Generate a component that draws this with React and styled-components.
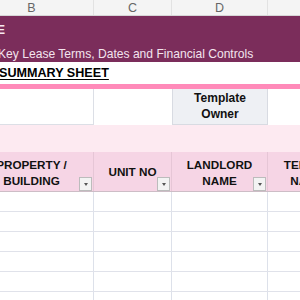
import React from "react";
import styled, { createGlobalStyle } from "styled-components";

const GlobalStyle = createGlobalStyle`
  html, body {
    margin: 0;
    padding: 0;
    background: #ffffff;
    overflow: hidden;
  }
  body {
    font-family: "Liberation Sans", Arial, sans-serif;
  }
`;

const COLS = "124px 78px 96px 80px";

const Viewport = styled.div`
  width: 300px;
  height: 300px;
  overflow: hidden;
`;

const Sheet = styled.div`
  margin-left: -30px;
  width: 378px;
  display: flex;
  flex-direction: column;
`;

const Row = styled.div`
  display: grid;
  grid-template-columns: ${COLS};
  height: ${(p) => p.$h}px;
  background: ${(p) => p.$bg || "#ffffff"};
  box-sizing: border-box;
  border-bottom: ${(p) => (p.$line ? `1px solid ${p.$line}` : "none")};
`;

const ColLetter = styled.div`
  display: flex;
  align-items: center;
  justify-content: center;
  font-size: 12.5px;
  color: #666666;
  background: #f4f4f4;
  border-right: 1px solid #e2e2e2;
`;

const Banner = styled.div`
  height: 46px;
  background: #7b2d5b;
  display: flex;
  flex-direction: column;
  padding-left: 28px;
  box-sizing: border-box;
`;

/* only the tail of the title spills into view from column A */
const TitleSlot = styled.div`
  width: 5px;
  margin-left: 2px;
  margin-top: 7px;
  display: flex;
  justify-content: flex-end;
  white-space: nowrap;
  font-size: 12px;
  font-weight: bold;
  color: #f6e9f1;
  height: 14px;
  line-height: 14px;
`;

const Subtitle = styled.div`
  margin-top: 10px;
  font-size: 12.1px;
  color: #f3e4ee;
  white-space: nowrap;
  line-height: 14px;
`;

const SummaryRow = styled.div`
  height: 22px;
  padding-left: 29px;
  display: flex;
  align-items: flex-start;
`;

const SummaryTitle = styled.span`
  margin-top: 4px;
  font-size: 12.6px;
  font-weight: bold;
  color: #000000;
  text-decoration: underline;
  text-underline-offset: 2px;
  white-space: nowrap;
`;

const PinkRule = styled.div`
  height: 5px;
  background: #ff8ab9;
`;

const Cell = styled.div`
  box-sizing: border-box;
  position: relative;
  display: flex;
  align-items: center;
  justify-content: center;
  text-align: center;
  background: ${(p) => p.$bg || "transparent"};
  border-right: ${(p) => (p.$right ? `1px solid ${p.$right}` : "none")};
  border-bottom: ${(p) => (p.$bottom ? `1px solid ${p.$bottom}` : "none")};
  border-left: ${(p) => (p.$left ? `1px solid ${p.$left}` : "none")};
`;

const Label = styled.div`
  font-size: ${(p) => p.$size || 11.7}px;
  font-weight: bold;
  line-height: 15.5px;
  color: #111111;
  white-space: nowrap;
  padding-top: ${(p) => p.$pt || 0}px;
`;

const FilterButton = styled.div`
  position: absolute;
  right: 1px;
  bottom: 0px;
  width: 13px;
  height: 14px;
  box-sizing: border-box;
  background: #f3f3f3;
  border: 1px solid #bcbcbc;
  display: flex;
  align-items: center;
  justify-content: center;

  &::after {
    content: "";
    border-left: 2.5px solid transparent;
    border-right: 2.5px solid transparent;
    border-top: 3px solid #555555;
  }
`;

const DataCell = styled.div`
  border-right: 1px solid #dde1ea;
`;

const headers = [
  ["PROPERTY /", "BUILDING"],
  ["UNIT NO"],
  ["LANDLORD", "NAME"],
  ["TENANT", "NAME"],
];

const DataRow = () => (
  <Row $h={20} $line="#e0e2ea">
    <DataCell />
    <DataCell />
    <DataCell />
    <DataCell />
  </Row>
);

export default function App() {
  return (
    <Viewport>
      <GlobalStyle />
      <Sheet>
        <Row $h={16} $line="#d6d6d6">
          {["B", "C", "D", "E"].map((c) => (
            <ColLetter key={c}>{c}</ColLetter>
          ))}
        </Row>

        <Banner>
          <TitleSlot>LEASE ABSTRACT TEMPLATE</TitleSlot>
          <Subtitle>Key Lease Terms, Dates and Financial Controls</Subtitle>
        </Banner>

        <SummaryRow>
          <SummaryTitle>SUMMARY SHEET</SummaryTitle>
        </SummaryRow>

        <PinkRule />

        <Row $h={36}>
          <Cell $right="#dcdfe6" $bottom="#dcdfe6" />
          <Cell />
          <Cell $bg="#eef0f4" $right="#d8dbe2" $bottom="#d8dbe2" $left="#d8dbe2">
            <Label $size={12}>
              Template
              <br />
              Owner
            </Label>
          </Cell>
          <Cell />
        </Row>

        <Row $h={27} $bg="#fdeaf1" />

        <Row $h={40} $bg="#f6d5e5" $line="#cdbdc6">
          {headers.map((lines, i) => (
            <Cell key={i} $right="#e6c6d6">
              <Label $pt={lines.length === 1 ? 0 : 2}>
                {lines.map((l, j) => (
                  <React.Fragment key={j}>
                    {j > 0 && <br />}
                    {l}
                  </React.Fragment>
                ))}
              </Label>
              <FilterButton />
            </Cell>
          ))}
        </Row>

        {Array.from({ length: 6 }).map((_, i) => (
          <DataRow key={i} />
        ))}
      </Sheet>
    </Viewport>
  );
}
